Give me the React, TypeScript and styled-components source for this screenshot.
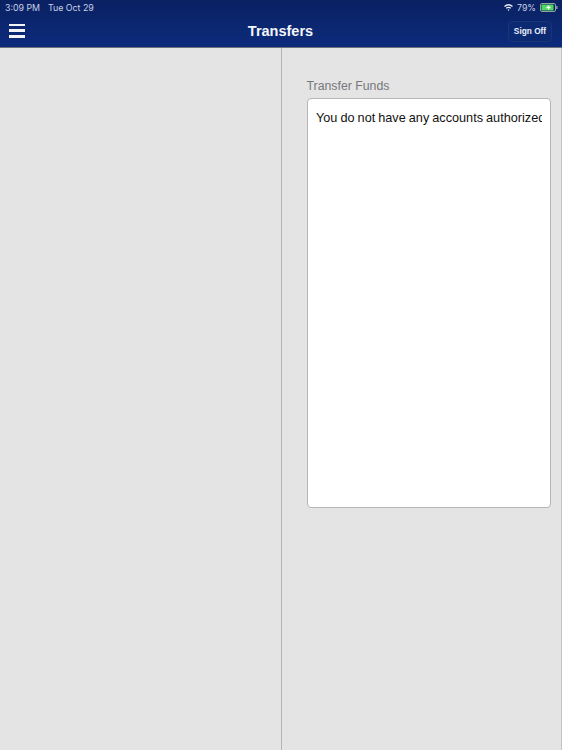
import React from "react";
import styled, { createGlobalStyle } from "styled-components";

const Global = createGlobalStyle`
  html, body { margin: 0; padding: 0; height: 100%; background: #e4e4e4; }
  #root { height: 100%; }
  * { box-sizing: border-box; }
`;

const Page = styled.div`
  width: 562px;
  height: 750px;
  display: flex;
  flex-direction: column;
  overflow: hidden;
  font-family: "Liberation Sans", Arial, sans-serif;
  background: #e4e4e4;
`;

const Header = styled.header`
  height: 48px;
  flex: none;
  display: flex;
  flex-direction: column;
  background: linear-gradient(180deg, #0a2162 0%, #0b2770 55%, #0c2b7c 100%);
  border-bottom: 1px solid #6d7079;
`;

const StatusBar = styled.div`
  height: 15px;
  flex: none;
  display: flex;
  align-items: center;
  justify-content: space-between;
  padding: 0 4px 0 5px;
  color: #c9d1e6;
  font-size: 8.800px;
  font-family: "Inter", "Liberation Sans", sans-serif;
`;

const StatusGroup = styled.div<{ $gap: number }>`
  display: flex;
  align-items: center;
  gap: ${(p) => p.$gap}px;
`;

const NavBar = styled.div`
  flex: 1;
  display: grid;
  grid-template-columns: 1fr auto 1fr;
  align-items: center;
  padding: 0 10px 0 9px;
`;

const MenuButton = styled.button`
  justify-self: start;
  width: 16px;
  height: 14px;
  margin-top: -1px;
  padding: 0;
  border: 0;
  background: none;
  display: flex;
  flex-direction: column;
  justify-content: space-between;
`;

const MenuLine = styled.span`
  display: block;
  height: 2.500px;
  background: #f2f4fa;
`;

const Title = styled.h1`
  margin: 0;
  color: #f3f5fb;
  font-size: 14.500px;
  font-weight: 700;
`;

const SignOff = styled.button`
  justify-self: end;
  width: 44px;
  height: 21px;
  padding: 0;
  border: 1px solid #1a3475;
  border-radius: 4px;
  background: #0c2a74;
  color: #eef1f8;
  font-family: inherit;
  font-size: 8.300px;
  font-weight: 700;
`;

const Body = styled.main`
  flex: 1;
  display: flex;
  min-height: 0;
`;

const LeftPane = styled.section`
  width: 282px;
  flex: none;
  border-right: 1px solid #b4b4b4;
`;

const RightPane = styled.section`
  flex: 1;
  min-width: 0;
  display: flex;
  flex-direction: column;
  padding: 31px 10.500px 0 24.500px;
  border-right: 1px solid #c4c4c4;
`;

const FieldLabel = styled.label`
  color: #77777a;
  font-size: 12.300px;
  line-height: 15px;
  margin-bottom: 4px;
`;

const MessageBox = styled.div`
  height: 410px;
  padding: 11px 8px 0 8.500px;
  background: #fff;
  border: 1px solid #b5b5b7;
  border-radius: 4px;
  color: #111;
  white-space: nowrap;
  overflow: hidden;
`;

const MessageText = styled.div`
  font-size: 12.700px;
  line-height: 16px;
  word-spacing: -0.500px;
  overflow: hidden;
`;

const Wifi = () => (
  <svg width="9" height="7" viewBox="0 0 18 14" fill="none" stroke="#eef1f8" strokeWidth="2.6">
    <path d="M1 5c5-4.500 11-4.500 16 0" />
    <path d="M4.500 8.500c3-2.500 6-2.500 9 0" />
    <circle cx="9" cy="12" r="1.500" fill="#eef1f8" stroke="none" />
  </svg>
);

const Battery = () => (
  <svg width="18" height="9" viewBox="0 0 18 9">
    <rect x="0.500" y="0.500" width="15" height="8" rx="1.500" fill="none" stroke="#8fa79a" />
    <rect x="1.500" y="1.500" width="12" height="6" rx="0.500" fill="#4fd964" />
    <rect x="16.200" y="3" width="1.300" height="3" fill="#8fa79a" />
    <path d="M8.500 2.500v4M6.500 4.500h4" stroke="#fff" strokeWidth="1.300" fill="none" />
  </svg>
);

export default function App() {
  return (
    <Page>
      <Global />
      <Header>
        <StatusBar>
          <StatusGroup $gap={8}>
            <span>3:09 PM</span>
            <span>Tue Oct 29</span>
          </StatusGroup>
          <StatusGroup $gap={4}>
            <Wifi />
            <span>79%</span>
            <Battery />
          </StatusGroup>
        </StatusBar>
        <NavBar>
          <MenuButton aria-label="Menu">
            <MenuLine />
            <MenuLine />
            <MenuLine />
          </MenuButton>
          <Title>Transfers</Title>
          <SignOff>Sign Off</SignOff>
        </NavBar>
      </Header>
      <Body>
        <LeftPane />
        <RightPane>
          <FieldLabel>Transfer Funds</FieldLabel>
          <MessageBox>
            <MessageText>You do not have any accounts authorized</MessageText>
          </MessageBox>
        </RightPane>
      </Body>
    </Page>
  );
}
